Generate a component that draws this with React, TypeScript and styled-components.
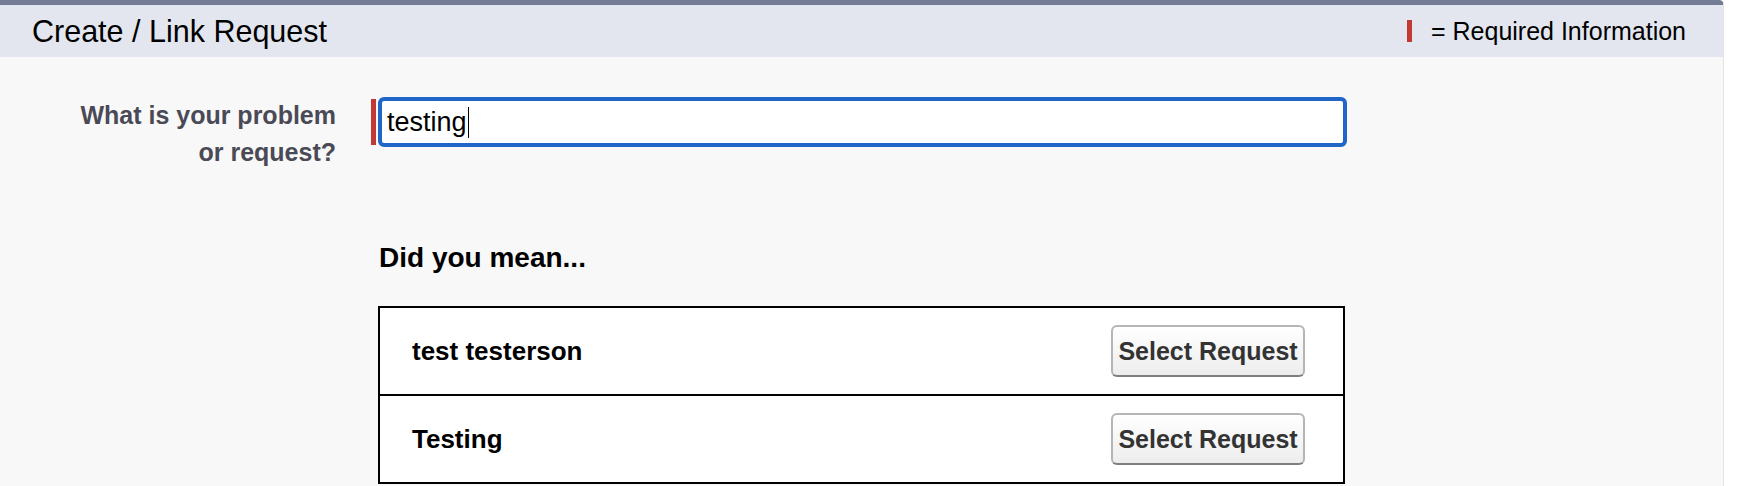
import styled, { createGlobalStyle } from "styled-components";

const GlobalStyle = createGlobalStyle`
  html, body {
    margin: 0;
    padding: 0;
    background: #ffffff;
    font-family: "Liberation Sans", Arial, Helvetica, sans-serif;
  }
`;

const Panel = styled.section`
  width: 1724px;
  min-height: 486px;
  box-sizing: border-box;
  background: #f8f8f8;
  border-top: 5px solid #747c95;
  border-right: 1px solid #e4e4e4;
  border-top-right-radius: 5px;
`;

const Header = styled.header`
  height: 52px;
  display: flex;
  align-items: center;
  justify-content: space-between;
  padding: 0 37px 0 32px;
  background: #e3e6ef;
`;

const Title = styled.h2`
  margin: 0;
  font-size: 30.5px;
  font-weight: normal;
  color: #000;
`;

const Legend = styled.div`
  display: flex;
  align-items: center;
  gap: 19px;
  font-size: 25px;
  color: #000;
`;

const RequiredMark = styled.span<{ $height: number }>`
  display: block;
  width: 5px;
  height: ${(p) => p.$height}px;
  background: #c23934;
`;

const Body = styled.div`
  padding: 40px 0 0;
`;

const FieldRow = styled.div`
  display: grid;
  grid-template-columns: 336px 1fr;
  column-gap: 35px;
  align-items: start;
`;

const Label = styled.label`
  text-align: right;
  font-size: 25px;
  line-height: 37px;
  font-weight: bold;
  color: #4a4a56;
`;

const Field = styled.div`
  display: flex;
  align-items: center;
  gap: 2px;
`;

const TextBox = styled.div`
  width: 969px;
  height: 50px;
  box-sizing: border-box;
  display: flex;
  align-items: center;
  padding: 0 5px;
  background: #fff;
  border: 4px solid #2065c8;
  border-radius: 6px;
  font-size: 27px;
  color: #000;
`;

const Caret = styled.span`
  display: inline-block;
  width: 1px;
  height: 31px;
  margin-left: 1px;
  background: #000;
`;

const Suggestions = styled.div`
  padding: 71px 0 0 378px;
`;

const SuggestTitle = styled.h3`
  margin: 0 0 0 1px;
  font-size: 28px;
  line-height: 32px;
  font-weight: bold;
  color: #000;
`;

const Results = styled.div`
  margin-top: 32px;
  width: 967px;
  box-sizing: border-box;
  border: 2px solid #000;
  border-bottom: none;
  background: #fff;
`;

const ResultRow = styled.div`
  height: 88px;
  box-sizing: border-box;
  display: flex;
  align-items: center;
  justify-content: space-between;
  padding: 0 38px 0 32px;
  border-bottom: 2px solid #000;
`;

const ResultName = styled.span`
  font-size: 26px;
  font-weight: bold;
  color: #000;
`;

const Button = styled.button`
  height: 52px;
  width: 194px;
  padding: 0;
  font-family: inherit;
  font-size: 25px;
  font-weight: bold;
  color: #333;
  background: linear-gradient(#ffffff, #ededed);
  border: 2px solid #b5b5b5;
  border-bottom-color: #7f7f7f;
  border-radius: 6px;
  cursor: pointer;
`;

const results = ["test testerson", "Testing"];

export default function App() {
  return (
    <>
      <GlobalStyle />
      <Panel>
        <Header>
          <Title>Create / Link Request</Title>
          <Legend>
            <RequiredMark $height={22} />
            <span>= Required Information</span>
          </Legend>
        </Header>
        <Body>
          <FieldRow>
            <Label htmlFor="problem">
              What is your problem
              <br />
              or request?
            </Label>
            <Field>
              <RequiredMark $height={46} />
              <TextBox id="problem">
                testing
                <Caret />
              </TextBox>
            </Field>
          </FieldRow>
          <Suggestions>
            <SuggestTitle>Did you mean...</SuggestTitle>
            <Results>
              {results.map((name) => (
                <ResultRow key={name}>
                  <ResultName>{name}</ResultName>
                  <Button type="button">Select Request</Button>
                </ResultRow>
              ))}
            </Results>
          </Suggestions>
        </Body>
      </Panel>
    </>
  );
}
